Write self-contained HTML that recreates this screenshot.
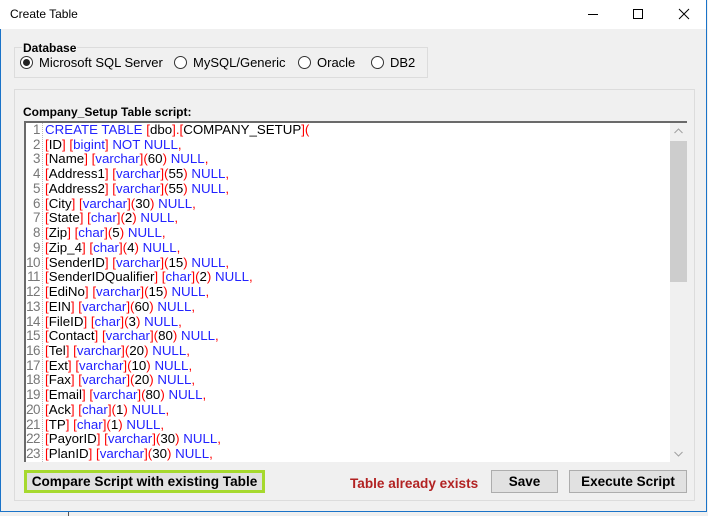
<!DOCTYPE html>
<html><head><meta charset="utf-8">
<style>
*{margin:0;padding:0;box-sizing:border-box}
body{width:708px;height:516px;background:#f0f0f0;position:relative;overflow:hidden;font-family:"Liberation Sans",Arial,sans-serif;font-size:13px;color:#000}
.win{position:absolute;left:0;top:0;width:707px;height:512px;background:#f0f0f0;border:1px solid #1a73c8;border-top:none}
.title{position:absolute;left:0;top:0;width:706px;height:29px;background:#fff}
.title span{position:absolute;left:10px;top:7px;font-size:12px}
.grp{position:absolute;border:1px solid #dcdcdc}
.lbl{position:absolute;font-weight:bold;font-size:12px}
.radio{position:absolute;top:56px;width:13px;height:13px;border:1px solid #333;border-radius:50%;background:#fff}
.radio.on::after{content:"";position:absolute;left:2px;top:2px;width:7px;height:7px;border-radius:50%;background:#222}
.rt{position:absolute;top:55px;font-size:13px}
.tb{position:absolute;left:24px;top:121px;width:663px;height:341px;background:#fff;border-top:2px solid #6a6a6a;border-left:2px solid #6a6a6a;overflow:hidden}
.gut{position:absolute;left:0;top:0;width:17px;height:100%;border-right:1px dotted #bbb}
.ln{position:absolute;left:0;width:14px;text-align:right;color:#777;font-size:13.4px;line-height:14.73px;letter-spacing:-0.5px}
.code{position:absolute;left:19px;top:0;font-size:13.3px;line-height:14.73px;white-space:pre}
.r{color:#f00}.b{color:#2323ff}
.sb{position:absolute;right:0;top:0;width:17px;height:100%;background:#f0f0f0}
.thumb{position:absolute;left:0;top:18px;width:17px;height:141px;background:#cdcdcd}
.btn{position:absolute;top:470px;height:23px;background:#e1e1e1;border:1px solid #adadad;font-size:13.5px;font-weight:bold;text-align:center;line-height:21px}
</style></head><body>
<div class="win"></div>
<div class="title"><span>Create Table</span>
<svg style="position:absolute;left:580px;top:8px" width="120" height="14"><line x1="8" y1="6.5" x2="18" y2="6.5" stroke="#000"/><rect x="53.5" y="1.5" width="9" height="9" fill="none" stroke="#000"/><path d="M99 1 L109 11 M109 1 L99 11" stroke="#000"/></svg>
</div>
<div class="grp" style="left:14px;top:47px;width:414px;height:31px"></div>
<div class="lbl" style="left:22px;top:41px;background:#f0f0f0;padding:0 1px">Database</div>
<div class="radio on" style="left:20px"></div><div class="rt" style="left:39px">Microsoft SQL Server</div>
<div class="radio" style="left:174px"></div><div class="rt" style="left:193px">MySQL/Generic</div>
<div class="radio" style="left:298px"></div><div class="rt" style="left:317px">Oracle</div>
<div class="radio" style="left:371px"></div><div class="rt" style="left:390px">DB2</div>
<div class="grp" style="left:14px;top:89px;width:681px;height:412px"></div>
<div class="lbl" style="left:23px;top:105px">Company_Setup Table script:</div>
<div class="tb">
<div class="gut"></div>
<div class="ln" style="top:0">1<br>2<br>3<br>4<br>5<br>6<br>7<br>8<br>9<br>10<br>11<br>12<br>13<br>14<br>15<br>16<br>17<br>18<br>19<br>20<br>21<br>22<br>23</div>
<div class="code"><span class="b">CREATE TABLE </span><span class="r">[</span>dbo<span class="r">].[</span>COMPANY_SETUP<span class="r">](</span>
<span class="r">[</span>ID<span class="r">]</span> <span class="r">[</span><span class="b">bigint</span><span class="r">]</span> <span class="b">NOT NULL</span><span class="r">,</span>
<span class="r">[</span>Name<span class="r">]</span> <span class="r">[</span><span class="b">varchar</span><span class="r">](</span>60<span class="r">)</span> <span class="b">NULL</span><span class="r">,</span>
<span class="r">[</span>Address1<span class="r">]</span> <span class="r">[</span><span class="b">varchar</span><span class="r">](</span>55<span class="r">)</span> <span class="b">NULL</span><span class="r">,</span>
<span class="r">[</span>Address2<span class="r">]</span> <span class="r">[</span><span class="b">varchar</span><span class="r">](</span>55<span class="r">)</span> <span class="b">NULL</span><span class="r">,</span>
<span class="r">[</span>City<span class="r">]</span> <span class="r">[</span><span class="b">varchar</span><span class="r">](</span>30<span class="r">)</span> <span class="b">NULL</span><span class="r">,</span>
<span class="r">[</span>State<span class="r">]</span> <span class="r">[</span><span class="b">char</span><span class="r">](</span>2<span class="r">)</span> <span class="b">NULL</span><span class="r">,</span>
<span class="r">[</span>Zip<span class="r">]</span> <span class="r">[</span><span class="b">char</span><span class="r">](</span>5<span class="r">)</span> <span class="b">NULL</span><span class="r">,</span>
<span class="r">[</span>Zip_4<span class="r">]</span> <span class="r">[</span><span class="b">char</span><span class="r">](</span>4<span class="r">)</span> <span class="b">NULL</span><span class="r">,</span>
<span class="r">[</span>SenderID<span class="r">]</span> <span class="r">[</span><span class="b">varchar</span><span class="r">](</span>15<span class="r">)</span> <span class="b">NULL</span><span class="r">,</span>
<span class="r">[</span>SenderIDQualifier<span class="r">]</span> <span class="r">[</span><span class="b">char</span><span class="r">](</span>2<span class="r">)</span> <span class="b">NULL</span><span class="r">,</span>
<span class="r">[</span>EdiNo<span class="r">]</span> <span class="r">[</span><span class="b">varchar</span><span class="r">](</span>15<span class="r">)</span> <span class="b">NULL</span><span class="r">,</span>
<span class="r">[</span>EIN<span class="r">]</span> <span class="r">[</span><span class="b">varchar</span><span class="r">](</span>60<span class="r">)</span> <span class="b">NULL</span><span class="r">,</span>
<span class="r">[</span>FileID<span class="r">]</span> <span class="r">[</span><span class="b">char</span><span class="r">](</span>3<span class="r">)</span> <span class="b">NULL</span><span class="r">,</span>
<span class="r">[</span>Contact<span class="r">]</span> <span class="r">[</span><span class="b">varchar</span><span class="r">](</span>80<span class="r">)</span> <span class="b">NULL</span><span class="r">,</span>
<span class="r">[</span>Tel<span class="r">]</span> <span class="r">[</span><span class="b">varchar</span><span class="r">](</span>20<span class="r">)</span> <span class="b">NULL</span><span class="r">,</span>
<span class="r">[</span>Ext<span class="r">]</span> <span class="r">[</span><span class="b">varchar</span><span class="r">](</span>10<span class="r">)</span> <span class="b">NULL</span><span class="r">,</span>
<span class="r">[</span>Fax<span class="r">]</span> <span class="r">[</span><span class="b">varchar</span><span class="r">](</span>20<span class="r">)</span> <span class="b">NULL</span><span class="r">,</span>
<span class="r">[</span>Email<span class="r">]</span> <span class="r">[</span><span class="b">varchar</span><span class="r">](</span>80<span class="r">)</span> <span class="b">NULL</span><span class="r">,</span>
<span class="r">[</span>Ack<span class="r">]</span> <span class="r">[</span><span class="b">char</span><span class="r">](</span>1<span class="r">)</span> <span class="b">NULL</span><span class="r">,</span>
<span class="r">[</span>TP<span class="r">]</span> <span class="r">[</span><span class="b">char</span><span class="r">](</span>1<span class="r">)</span> <span class="b">NULL</span><span class="r">,</span>
<span class="r">[</span>PayorID<span class="r">]</span> <span class="r">[</span><span class="b">varchar</span><span class="r">](</span>30<span class="r">)</span> <span class="b">NULL</span><span class="r">,</span>
<span class="r">[</span>PlanID<span class="r">]</span> <span class="r">[</span><span class="b">varchar</span><span class="r">](</span>30<span class="r">)</span> <span class="b">NULL</span><span class="r">,</span></div>
<div class="sb"><svg style="position:absolute;left:4px;top:5px" width="9" height="6"><path d="M0.5 5 L4.5 1 L8.5 5" fill="none" stroke="#a0a0a0"/></svg><div class="thumb"></div><svg style="position:absolute;left:4px;bottom:5px" width="9" height="6"><path d="M0.5 1 L4.5 5 L8.5 1" fill="none" stroke="#a0a0a0"/></svg></div>
</div>
<div class="btn" style="left:24px;width:241px;border:3px solid #a6d92e;line-height:17px;font-size:13.6px">Compare Script with existing Table</div>
<div style="position:absolute;left:350px;top:476px;color:#b22222;font-weight:bold;font-size:13.6px">Table already exists</div>
<div class="btn" style="left:491px;width:67px">Save</div>
<div class="btn" style="left:569px;width:118px">Execute Script</div>
<div style="position:absolute;left:0;top:512px;width:708px;height:4px;background:#f0f0f0"></div>
<div style="position:absolute;left:68px;top:512px;width:1px;height:4px;background:#555"></div>
</body></html>
